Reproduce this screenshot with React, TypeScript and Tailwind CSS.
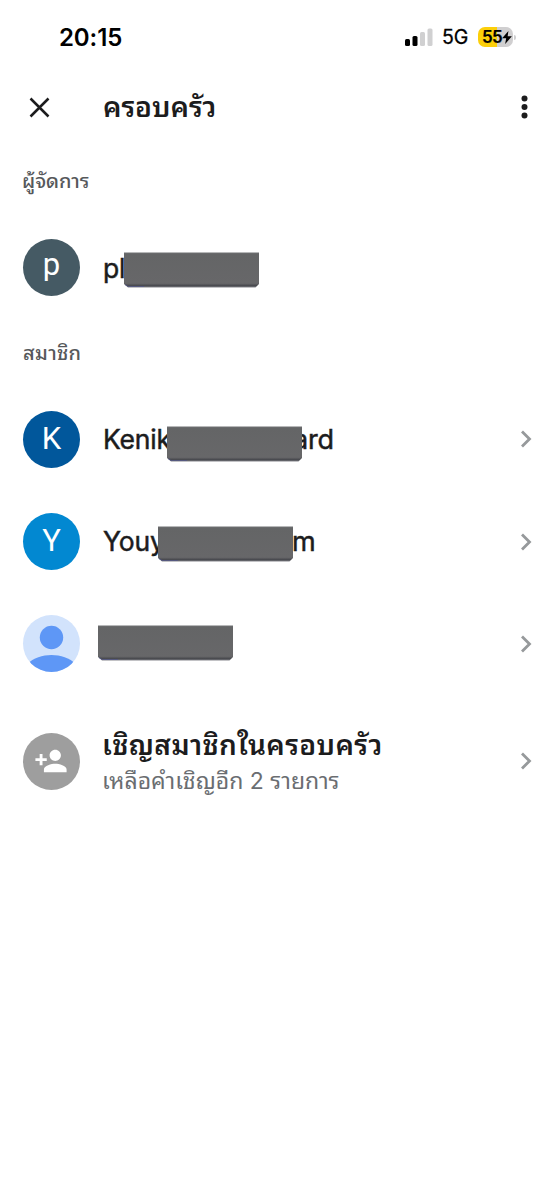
import React from 'react';

interface Member {
  id: string;
  initial?: string;
  avatarClass: string;
  start?: string;
  startClass: string;
  end?: string;
  endClass?: string;
  barClass?: string;
}

const members: Member[] = [
  {
    id: 'kenik',
    initial: 'K',
    avatarClass: 'bg-[#01579b]',
    start: 'Kenik',
    startClass: 'w-[64px]',
    end: 'ard',
    endClass: '-ml-[9px]',
    barClass: 'top-[5px]',
  },
  {
    id: 'youy',
    initial: 'Y',
    avatarClass: 'bg-[#0288d1]',
    start: 'Youy',
    startClass: 'w-[55px]',
    end: 'm',
    endClass: '-ml-px',
    barClass: 'top-[2px]',
  },
  { id: 'hidden', avatarClass: 'bg-[#d2e3fc]', startClass: '-ml-[5px]', barClass: '-top-px' },
];

const Chevron: React.FC = () => (
  <svg className="ml-auto mr-[22px] h-[18px] w-[12px] shrink-0" viewBox="0 0 12 18" fill="none">
    <path d="M2 1.5l7.5 7.5L2 16.5" stroke="#96999b" strokeWidth="2.8" />
  </svg>
);

const Redaction: React.FC<{ className?: string }> = ({ className = '' }) => (
  <svg className={`relative z-10 h-[36px] w-[135px] shrink-0 ${className}`} viewBox="0 0 135 36">
    <defs>
      <linearGradient id="bar" x1="0" y1="0" x2="0" y2="1">
        <stop offset="0" stopColor="#707173" />
        <stop offset="0.05" stopColor="#646566" />
        <stop offset="0.88" stopColor="#676769" />
        <stop offset="0.95" stopColor="#47484d" />
        <stop offset="1" stopColor="#85868c" />
      </linearGradient>
    </defs>
    <path d="M0 .5h135V32l-3.5 3.5H4L0 32z" fill="url(#bar)" />
    <path d="M1 32.5l3 2h16" fill="none" stroke="#51568a" strokeWidth=".7" />
  </svg>
);

const Avatar: React.FC<{ className: string; children: React.ReactNode }> = ({ className, children }) => (
  <div
    className={`mr-[23px] flex size-[57px] shrink-0 items-center justify-center overflow-hidden rounded-full font-['Roboto','Noto_Sans',sans-serif] text-[31px] text-white ${className}`}
  >
    {children}
  </div>
);

const StatusBar: React.FC = () => (
  <div className="flex h-[74px] items-center pl-[59px] pr-[41px] text-black">
    <span className="relative top-px text-[24px] font-semibold leading-none tracking-[-0.1px]">20:15</span>
    <svg className="ml-auto h-[19px] w-[29px]" viewBox="0 0 29 19">
      <rect x="0" y="11" width="5" height="7" rx="1.5" />
      <rect x="7.5" y="8" width="5" height="10" rx="1.5" />
      <rect x="15" y="4" width="5" height="14" rx="1.5" fill="#d0d0d1" />
      <rect x="22.5" y="0.5" width="5" height="17.5" rx="1.5" fill="#d0d0d1" />
    </svg>
    <span className="relative top-px ml-[8px] w-[36px] text-[19.5px] leading-none [-webkit-text-stroke:0.3px]">5G</span>
    <div className="relative flex h-[20px] w-[35px] items-center rounded-[7px] bg-[linear-gradient(90deg,#fccf0a_55%,#d0cfd0_55%)] pl-[4px]">
      <span className="text-[17px] font-semibold leading-none tracking-[-0.7px] [-webkit-text-stroke:0.2px]">55</span>
      <svg className="h-[13px] w-[10px]" viewBox="0 0 9 12">
        <path d="M5.8 0L0 6.8h3.7L2.8 12 9 4.9H5.1z" />
      </svg>
      <span className="absolute -right-[3px] top-[8px] h-[5px] w-[2px] rounded-r-full bg-[#d0d0d1]" />
    </div>
  </div>
);

export default function App() {
  return (
    <main className="flex h-[1200px] w-[554px] flex-col overflow-hidden bg-white font-['Inter','Noto_Sans_Thai_Looped','Loma','Waree','Garuda','Noto_Serif_Thai','Tlwg_Typo','FreeSans',sans-serif] text-[#1c1c1d]">
      <StatusBar />

      <header className="flex h-[66px] items-center pl-[29px] pr-[26px]">
        <svg className="size-[21px]" viewBox="0 0 21 21" fill="none">
          <path d="M1.5 1.5l18 18M19.5 1.5l-18 18" stroke="currentColor" strokeWidth="2.5" />
        </svg>
        <h1 className="ml-[53px] text-[28px] font-semibold leading-[40px]">ครอบครัว</h1>
        <svg className="ml-auto h-[24px] w-[7px]" viewBox="0 0 7 24" fill="currentColor">
          <circle cx="3.5" cy="3.5" r="3" />
          <circle cx="3.5" cy="12" r="3" />
          <circle cx="3.5" cy="20.5" r="3" />
        </svg>
      </header>

      <h2 className="flex h-[82px] items-center pl-[22px] text-[20px] font-medium text-[#56585b]">ผู้จัดการ</h2>
      <div className="flex h-[90px] items-center pl-[23px]">
        <Avatar className="bg-[#455a64]">
          <span className="-mt-[5px] leading-none">p</span>
        </Avatar>
        <span className="relative top-px w-[21px] text-[26.5px] leading-none tracking-[-0.3px] [-webkit-text-stroke:0.5px]">pl</span>
        <Redaction className="top-[3px]" />
      </div>

      <h2 className="flex h-[82px] items-center pl-[23px] text-[20px] font-medium tracking-[0.3px] text-[#56585b]">สมาชิก</h2>
      <ul className="-mt-[6px]">
        {members.map((member) => (
          <li key={member.id} className="flex h-[102.4px] items-center pl-[23px]">
            <Avatar className={member.avatarClass}>
              {member.initial ?? (
                <svg className="size-[57px]" viewBox="0 0 57 57" fill="#5e97f6">
                  <circle cx="28.5" cy="22.5" r="11.7" />
                  <path d="M4 49c13-12 36-12 49 0v8H4z" />
                </svg>
              )}
            </Avatar>
            <span className={`text-[26.5px] leading-none tracking-[-0.2px] [-webkit-text-stroke:0.5px] ${member.startClass}`}>
              {member.start}
            </span>
            <Redaction className={member.barClass} />
            {member.end && (
              <span className={`text-[27px] leading-none tracking-[-0.2px] [-webkit-text-stroke:0.5px] ${member.endClass}`}>
                {member.end}
              </span>
            )}
            <Chevron />
          </li>
        ))}
      </ul>

      <div className="mt-[16px] flex h-[100px] items-center pl-[23px]">
        <Avatar className="bg-[#9e9e9e]">
          <svg className="mr-px size-[34px]" viewBox="0 0 24 24" fill="currentColor">
            <path d="M15 12c2.21 0 4-1.79 4-4s-1.79-4-4-4-4 1.79-4 4 1.79 4 4 4zm-9-2V7H4v3H1v2h3v3h2v-3h3v-2H6zm9 4c-2.67 0-8 1.34-8 4v2h16v-2c0-2.66-5.33-4-8-4z" />
          </svg>
        </Avatar>
        <div className="-ml-px whitespace-nowrap">
          <div className="relative top-px text-[28px] font-semibold leading-[38px] tracking-[0.4px]">เชิญสมาชิกในครอบครัว</div>
          <div className="relative top-px text-[23px] leading-[34px] text-[#6a6d71]">เหลือคำเชิญอีก 2 รายการ</div>
        </div>
        <Chevron />
      </div>
    </main>
  );
}
